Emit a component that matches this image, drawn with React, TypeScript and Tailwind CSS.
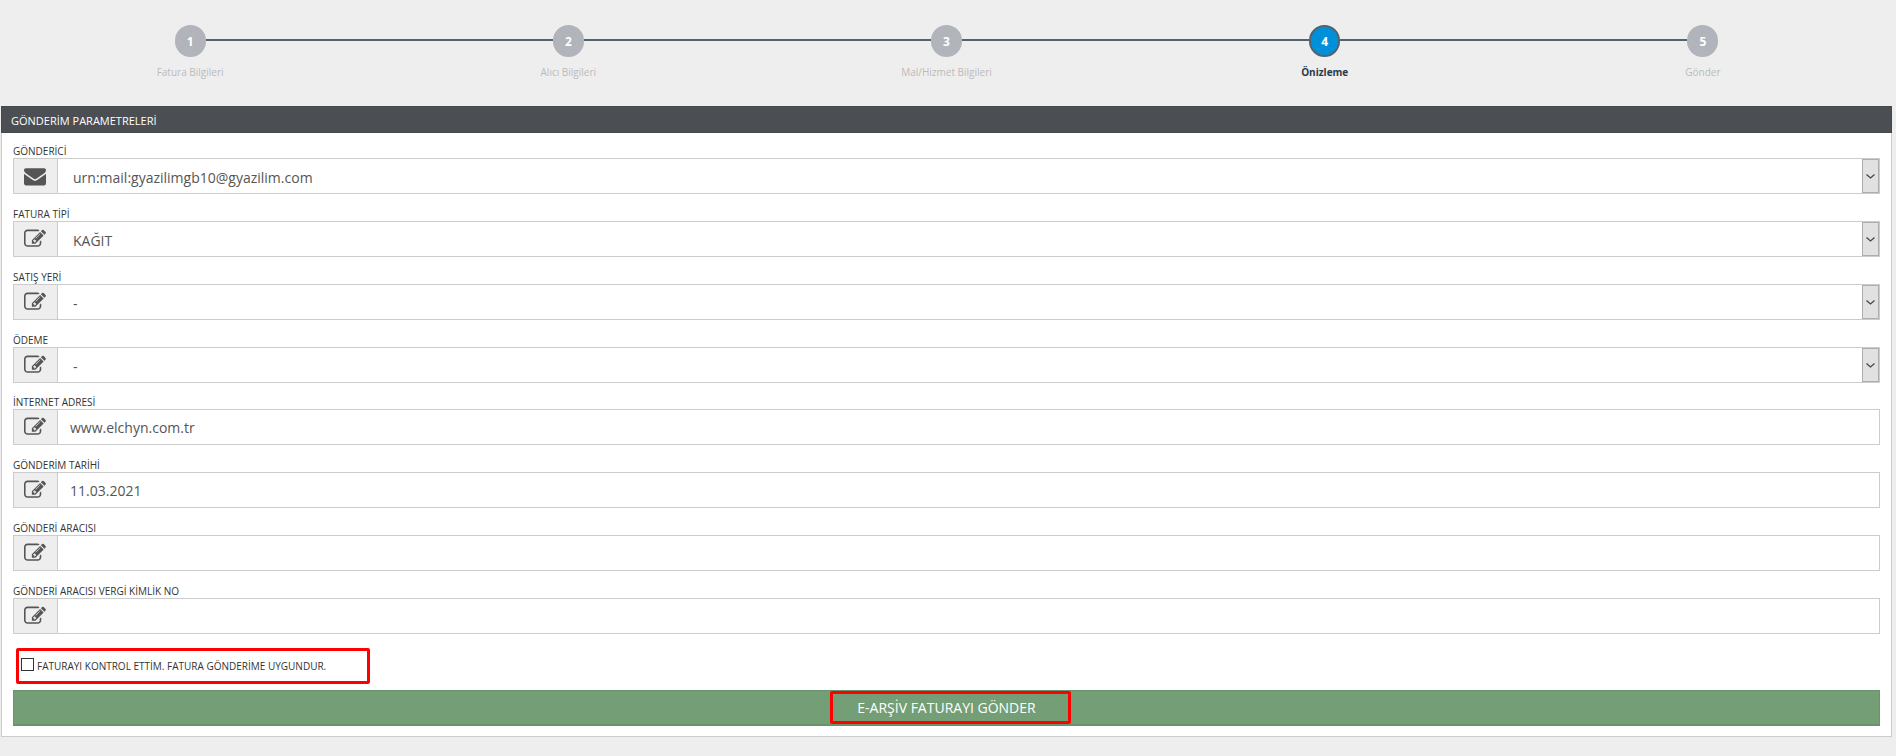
import { useState } from "react";
import clsx from "clsx";

const steps = ["Fatura Bilgileri", "Alıcı Bilgileri", "Mal/Hizmet Bilgileri", "Önizleme", "Gönder"];
const activeStep = 3;

const selects = [
  { id: "gonderici", label: "GÖNDERİCİ", value: "urn:mail:gyazilimgb10@gyazilim.com", icon: "mail" },
  { id: "fatura-tipi", label: "FATURA TİPİ", value: "KAĞIT", icon: "edit" },
  { id: "satis-yeri", label: "SATIŞ YERİ", value: "-", icon: "edit" },
  { id: "odeme", label: "ÖDEME", value: "-", icon: "edit" },
];

const inputs = [
  { id: "internet-adresi", label: "İNTERNET ADRESİ", value: "www.elchyn.com.tr" },
  { id: "gonderim-tarihi", label: "GÖNDERİM TARİHİ", value: "11.03.2021" },
  { id: "gonderi-aracisi", label: "GÖNDERİ ARACISI", value: "" },
  { id: "vergi-no", label: "GÖNDERİ ARACISI VERGİ KİMLİK NO", value: "" },
];

function EditIcon() {
  return (
    <svg viewBox="0 0 1792 1792" className="size-[22px] fill-current" aria-hidden="true">
      <path d="M888 1184l116-116-152-152-116 116v56h96v96h56zm440-720q-16-16-33 1l-350 350q-17 17-1 33t33-1l350-350q17-17 1-33zm80 594v190q0 119-84.5 203.5t-203.5 84.5h-832q-119 0-203.5-84.5t-84.5-203.5v-832q0-119 84.5-203.5t203.5-84.5h832q63 0 117 25 15 7 18 23 3 17-9 29l-49 49q-14 14-32 8-23-6-45-6h-832q-66 0-113 47t-47 113v832q0 66 47 113t113 47h832q66 0 113-47t47-113v-126q0-13 9-22l64-64q15-15 35-7t20 29zm-96-738l288 288-672 672h-288v-288zm444 132l-92 92-288-288 92-92q28-28 68-28t68 28l152 152q28 28 28 68t-28 68z" />
    </svg>
  );
}

function MailIcon() {
  return (
    <svg viewBox="0 0 1792 1792" className="size-[22px] fill-current" aria-hidden="true">
      <path d="M1792 710v794q0 66-47 113t-113 47h-1472q-66 0-113-47t-47-113v-794q44 49 101 87 362 246 497 345 57 42 92.5 65.5t94.5 48 110 24.5h2q51 0 110-24.5t94.5-48 92.5-65.5q170-123 498-345 57-39 100-87zm0-294q0 79-49 151t-122 123q-376 261-468 325-10 7-42.5 31t-54 38.5-52 32.5-57.5 27-50 9h-2q-23 0-50-9t-57.5-27-52-32.5-54-38.5-42.5-31q-91-64-262-182.5t-205-142.5q-62-42-117-115.5t-55-136.5q0-78 41.5-130t118.5-52h1472q65 0 112.5 47t47.5 113z" />
    </svg>
  );
}

function IconCell({ icon }: { icon: string }) {
  return (
    <span className="flex w-11 shrink-0 items-center justify-center border-r border-[#ccc] bg-[#eee] pr-px text-[#555]">
      {icon === "mail" ? <MailIcon /> : <EditIcon />}
    </span>
  );
}

function Stepper() {
  return (
    <ol className="flex pt-[25px] pb-[27px]">
      {steps.map((step, i) => {
        const active = i === activeStep;
        return (
          <li key={step} className="flex flex-1 flex-col items-center">
            <div className="flex w-full items-start">
              <span className={clsx("mt-3.5 h-0.5 flex-1", i > 0 && "bg-[#51636f]")} />
              <span
                className={clsx(
                  "flex h-8 w-[31px] items-center justify-center rounded-full pt-px text-xs font-bold text-white",
                  active ? "border-2 border-[#51636f] bg-[#0090d9]" : "bg-[#b1b4ba]"
                )}
              >
                {i + 1}
              </span>
              <span className={clsx("mt-3.5 h-0.5 flex-1", i < steps.length - 1 && "bg-[#51636f]")} />
            </div>
            <span className={clsx("mt-[9px] text-[10px] leading-[13px]", active ? "font-bold text-[#2b3a4a]" : "text-[#bbb]")}>
              {step}
            </span>
          </li>
        );
      })}
    </ol>
  );
}

export default function App() {
  const [checked, setChecked] = useState(false);

  return (
    <div className="min-h-screen bg-[#eeeeee] pr-1 pl-px font-['Open_Sans','Noto_Sans',sans-serif] text-[#333]">
      <Stepper />

      <section>
        <h2 className="border border-[#45484d] bg-[#4b4f54] px-[9px] pt-[5px] pb-[3px] text-[11px] leading-[17px] text-white">
          GÖNDERİM PARAMETRELERİ
        </h2>

        <form className="border border-t-0 border-[#ccc] bg-white px-[11px] pt-2 pb-[10px]" onSubmit={(e) => e.preventDefault()}>
          {selects.map((f) => (
            <div key={f.id} className="pb-[10px]">
              <label htmlFor={f.id} className="block pt-[3px] text-[10px] leading-[14px]">{f.label}</label>
              <div className="flex h-9 border border-[#ccc]">
                <IconCell icon={f.icon} />
                <div className="relative flex flex-1">
                  <select id={f.id} className="flex-1 appearance-none bg-white pt-1 pl-[15px] text-sm text-[#555] outline-none">
                    <option>{f.value}</option>
                  </select>
                  <span className="pointer-events-none absolute inset-y-0 right-0 flex w-[17px] items-center justify-center border border-[#adadad] bg-[#e1e1e1]">
                    <svg viewBox="0 0 9 5" className="h-[5px] w-[9px] fill-none stroke-[#444]" aria-hidden="true">
                      <path d="M.5.5l4 3.5 4-3.5" strokeWidth="1.2" />
                    </svg>
                  </span>
                </div>
              </div>
            </div>
          ))}

          {inputs.map((f) => (
            <div key={f.id} className="pb-[11px]">
              <label htmlFor={f.id} className="block pt-0.5 text-[10px] leading-[14px]">{f.label}</label>
              <div className="flex h-9 border border-[#ccc]">
                <IconCell icon="edit" />
                <input id={f.id} type="text" defaultValue={f.value} className="min-w-0 flex-1 bg-white px-3 pt-px text-sm text-[#555] outline-none" />
              </div>
            </div>
          ))}

          <div className="ml-[3px] mt-[3px] mb-1.5 flex h-9 w-[354px] items-center gap-[3px] rounded-xs border-3 border-[#f00] pl-0.5">
            <input
              id="kontrol"
              type="checkbox"
              checked={checked}
              onChange={(e) => setChecked(e.target.checked)}
              className="mb-1 size-[13px] appearance-none border border-[#333] bg-white checked:bg-[#333]"
            />
            <label htmlFor="kontrol" className="text-[10px] leading-[15px]">
              FATURAYI KONTROL ETTİM. FATURA GÖNDERİME UYGUNDUR.
            </label>
          </div>

          <button type="submit" className="relative flex h-9 w-full items-center justify-center border border-b-2 border-[#67946a] bg-[#739e76] text-sm text-white">
            E-ARŞİV FATURAYI GÖNDER
            {/* highlight frame round the caption */}
            <span className="absolute inset-y-0 left-1/2 ml-[-117px] w-[241px] rounded-xs border-3 border-[#f00]" />
          </button>
        </form>
      </section>
    </div>
  );
}
